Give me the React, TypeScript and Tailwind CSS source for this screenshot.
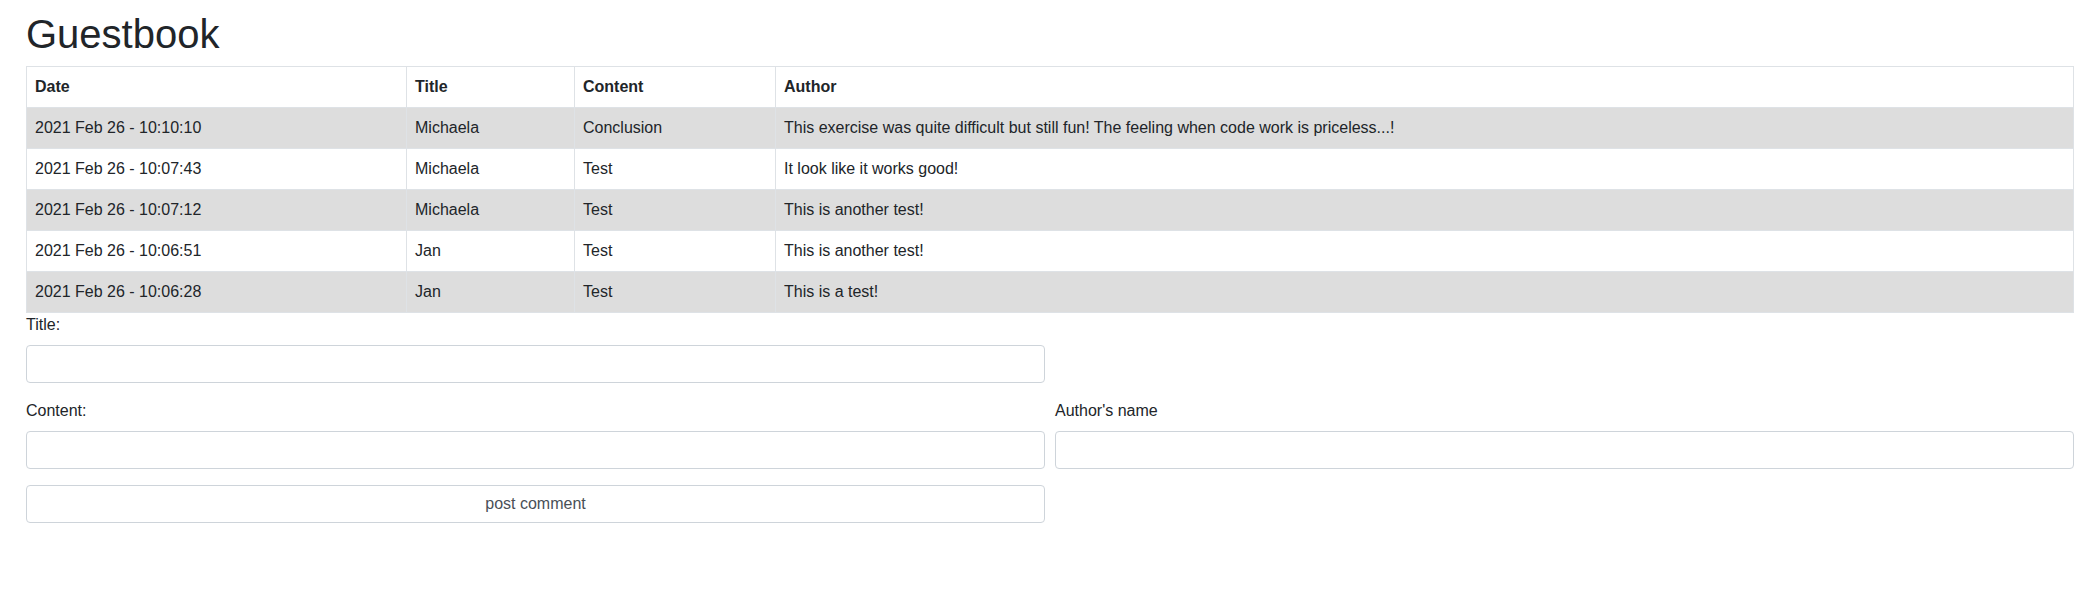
const entries = [
  { date: '2021 Feb 26 - 10:10:10', title: 'Michaela', content: 'Conclusion', author: 'This exercise was quite difficult but still fun! The feeling when code work is priceless...!' },
  { date: '2021 Feb 26 - 10:07:43', title: 'Michaela', content: 'Test', author: 'It look like it works good!' },
  { date: '2021 Feb 26 - 10:07:12', title: 'Michaela', content: 'Test', author: 'This is another test!' },
  { date: '2021 Feb 26 - 10:06:51', title: 'Jan', content: 'Test', author: 'This is another test!' },
  { date: '2021 Feb 26 - 10:06:28', title: 'Jan', content: 'Test', author: 'This is a test!' },
];

export default function App() {
  return (
    <div className="min-h-[600px] bg-white px-[26px] pt-[10px] text-[16px] leading-6 text-[#212529] font-['Liberation_Sans',Arial,sans-serif]">
      <h1 className="mb-2 text-[40px] font-medium leading-[48px]">Guestbook</h1>

      <table className="w-full border-collapse border border-[#dee2e6] table-fixed">
        <colgroup>
          <col className="w-[380px]" />
          <col className="w-[168px]" />
          <col className="w-[201px]" />
          <col />
        </colgroup>
        <thead>
          <tr>
            <th className="border border-[#dee2e6] px-2 py-2 text-left font-bold">Date</th>
            <th className="border border-[#dee2e6] px-2 py-2 text-left font-bold">Title</th>
            <th className="border border-[#dee2e6] px-2 py-2 text-left font-bold">Content</th>
            <th className="border border-[#dee2e6] px-2 py-2 text-left font-bold">Author</th>
          </tr>
        </thead>
        <tbody>
          {entries.map((e, i) => (
            <tr key={e.date} className={i % 2 === 0 ? 'bg-[#dddddd]' : 'bg-white'}>
              <td className="border border-[#dee2e6] px-2 py-2">{e.date}</td>
              <td className="border border-[#dee2e6] px-2 py-2">{e.title}</td>
              <td className="border border-[#dee2e6] px-2 py-2">{e.content}</td>
              <td className="border border-[#dee2e6] px-2 py-2">{e.author}</td>
            </tr>
          ))}
        </tbody>
      </table>

      <form className="flex flex-col" onSubmit={(ev) => ev.preventDefault()}>
        <div className="mb-4 grid grid-cols-2 gap-[10px]">
          <div>
            <label className="mb-2 block">Title:</label>
            <input type="text" className="block h-[38px] w-full rounded border border-[#ced4da] bg-white px-3" />
          </div>
        </div>
        <div className="mb-4 grid grid-cols-2 gap-[10px]">
          <div>
            <label className="mb-2 block">Content:</label>
            <input type="text" className="block h-[38px] w-full rounded border border-[#ced4da] bg-white px-3" />
          </div>
          <div>
            <label className="mb-2 block">Author's name</label>
            <input type="text" className="block h-[38px] w-full rounded border border-[#ced4da] bg-white px-3" />
          </div>
        </div>
        <div className="grid grid-cols-2 gap-[10px]">
          <button type="submit" className="h-[38px] w-full rounded border border-[#ced4da] bg-white text-[#495057]">
            post comment
          </button>
        </div>
      </form>
    </div>
  );
}
